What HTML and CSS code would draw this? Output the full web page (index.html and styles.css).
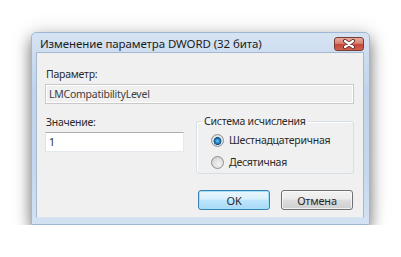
FILE: index.html
```html
<!DOCTYPE html>
<html lang="ru">
<head>
    <meta charset="UTF-8">
    <title>Изменение параметра DWORD (32 бита)</title>
    <link rel="stylesheet" href="styles.css">
</head>
<body>
    <div class="window">
        <div class="titlebar">
            <span class="title">Изменение параметра DWORD (32 бита)</span>
            <button class="close">
                <svg width="14" height="10" viewBox="0 0 14 10">
                    <path d="M3 2 L11 8 M11 2 L3 8" stroke="#5a2a26" stroke-width="4" stroke-linecap="round"/>
                    <path d="M3 2 L11 8 M11 2 L3 8" stroke="#fff" stroke-width="2.2" stroke-linecap="round"/>
                </svg>
            </button>
        </div>
        <div class="client">
            <div class="label">Параметр:</div>
            <div class="field field-disabled">LMCompatibilityLevel</div>
            <div class="row">
                <div class="value-col">
                    <div class="label">Значение:</div>
                    <div class="field field-value">1</div>
                </div>
                <fieldset class="group">
                    <legend>Система исчисления</legend>
                    <label class="radio-row"><span class="radio checked"></span>Шестнадцатеричная</label>
                    <label class="radio-row"><span class="radio"></span>Десятичная</label>
                </fieldset>
            </div>
            <div class="buttons">
                <button class="btn btn-default">OK</button>
                <button class="btn">Отмена</button>
            </div>
        </div>
    </div>
</body>
</html>
```

FILE: styles.css
```css
body {
    margin: 0;
    background: #fff;
    font-family: "Noto Sans", "Open Sans", sans-serif;
    font-size: 10.5px;
    letter-spacing: -0.25px;
    color: #2a2a2a;
}

.window {
    width: fit-content;
    margin: 32px 0 0 31px;
    padding: 0 5px 6px 4px;
    background: linear-gradient(#d6e3f2, #bfd4ec 30%, #c3d7ee 70%, #d3e2f3);
    border: 1px solid #9fb7d3;
    border-radius: 5px 5px 0 0;
    box-shadow: 0 7px 14px rgba(0, 0, 0, 0.45), 0 2px 22px rgba(0, 0, 0, 0.18);
}

.titlebar {
    display: flex;
    justify-content: space-between;
    height: 19px;
}

.title {
    padding: 3px 0 0 4px;
    line-height: 15px;
    font-size: 11.5px;
    letter-spacing: -0.1px;
    color: #1c1c1c;
}

.close {
    width: 30px;
    height: 14px;
    margin-top: 4px;
    padding: 0;
    display: flex;
    justify-content: center;
    align-items: center;
    border: 1px solid #7a3a35;
    border-radius: 3px;
    background: linear-gradient(#e7aa9c, #d7806f 45%, #c4463a 55%, #d0624f);
}

.client {
    width: 328px;
    height: 166px;
    box-sizing: border-box;
    padding: 14px 9px 9px 8px;
    background: #f0f0f0;
    border: 1px solid #a6b9d0;
    border-bottom-color: #d8e4f0;
}

.label {
    line-height: 15px;
    padding-left: 1px;
}

.field {
    height: 20px;
    margin-top: 2px;
    box-sizing: border-box;
    padding: 0 3px;
    line-height: 18px;
    border: 1px solid #dbdfe6;
    border-top-color: #abadb3;
}

.field-disabled {
    background: #f0f0f0;
    border-color: #c9c9c9;
    box-shadow: inset 1px 1px 0 #fff, inset -1px -1px 0 #fff;
    color: #404040;
}

.field-value {
    width: 139px;
    background: #fff;
    border-color: #e3e9ef;
    border-top-color: #abadb3;
    border-left-color: #e2e3ea;
}

.row {
    display: flex;
    align-items: flex-start;
    margin-top: 11px;
}

.group {
    width: 160px;
    margin: -1px 0 0 12px;
    padding: 1px 0 0;
    box-sizing: border-box;
    border: 1px solid #d5dfe5;
    border-radius: 3px;
    box-shadow: inset 1px 1px 0 #fff;
}

.group legend {
    margin-left: 5px;
    padding: 0 2px;
    line-height: 14px;
}

.radio-row {
    display: flex;
    align-items: center;
    height: 22px;
    padding-left: 14px;
    gap: 5px;
}

.radio {
    width: 11px;
    height: 11px;
    border: 1px solid #8e8f8f;
    border-radius: 50%;
    background: radial-gradient(circle at 60% 65%, #f4f4f4, #d6d6d6 70%, #c8c8c8);
}

.radio.checked {
    background: radial-gradient(circle at 50% 55%, #7ad0f6 0, #1f7fbd 28%, #0d4f86 45%, #e9e9e9 52%, #d8d8d8 80%);
}

.buttons {
    display: flex;
    justify-content: flex-end;
    gap: 11px;
    margin: 16px 1px 0 0;
}

.btn {
    width: 72px;
    height: 20px;
    padding: 0;
    font-family: inherit;
    font-size: 11px;
    letter-spacing: -0.2px;
    color: #2a2a2a;
    border: 1px solid #707070;
    border-radius: 3px;
    background: linear-gradient(#f2f2f2, #ebebeb 45%, #dddddd 50%, #cfcfcf);
    box-shadow: inset 0 0 0 1px rgba(255, 255, 255, 0.7);
}

.btn-default {
    border-color: #3c7fb1;
    background: linear-gradient(#eaf6fd, #d9f0fc 45%, #bee6fd 50%, #a7d9f5);
    box-shadow: inset 0 0 0 1px #9fe1fb;
}
```
